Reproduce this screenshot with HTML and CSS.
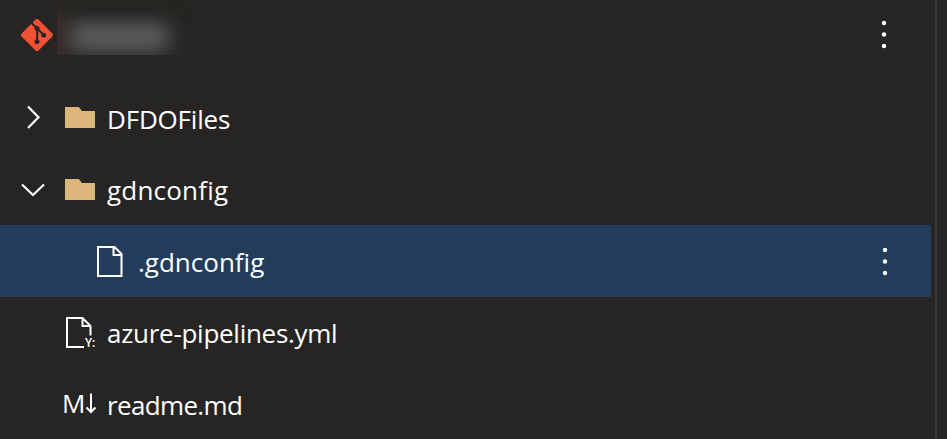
FILE: index.html
```
<!DOCTYPE html>
<html lang="en">
<head>
<meta charset="utf-8">
<title>Repository files</title>
<link rel="stylesheet" href="styles.css">
</head>
<body>
<main class="explorer">
  <header class="repo">
    <svg class="git" viewBox="0 0 24 24"><path d="M23.546 10.93L13.067.452c-.604-.603-1.582-.603-2.188 0L8.708 2.627l2.76 2.76c.645-.215 1.379-.07 1.889.441.516.515.658 1.258.438 1.9l2.658 2.66c.645-.223 1.387-.078 1.9.435.721.72.721 1.884 0 2.604-.719.719-1.881.719-2.6 0-.539-.541-.674-1.337-.404-1.996L12.86 8.955v6.525c.176.086.342.203.488.348.713.721.713 1.883 0 2.6-.719.721-1.889.721-2.609 0-.719-.719-.719-1.879 0-2.598.182-.18.387-.316.605-.406V8.835c-.217-.091-.424-.222-.6-.401-.545-.545-.676-1.342-.396-2.009L7.636 3.7.45 10.881c-.6.605-.6 1.584 0 2.189l10.48 10.477c.604.604 1.582.604 2.186 0l10.43-10.43c.605-.603.605-1.582 0-2.187"/></svg>
    <div class="redacted"><div class="smudge"></div></div>
    <svg class="more" viewBox="0 0 6 30"><circle cx="3" cy="4" r="2.2"/><circle cx="3" cy="15.500" r="2.200"/><circle cx="3" cy="27" r="2.200"/></svg>
  </header>
  <div class="row">
    <svg class="chevron" viewBox="0 0 26 26"><path d="M7 2.500l10.500 10.700L7 24"/></svg>
    <svg class="icon" viewBox="0 0 32 34"><path class="folder" d="M1 7h13.800l3.200 4h13v17H1z"/></svg>
    <span class="name dfdo">DFDOFiles</span>
  </div>
  <div class="row">
    <svg class="chevron" viewBox="0 0 26 26"><path d="M1 8.500l11 10.500 11-10.500"/></svg>
    <svg class="icon" viewBox="0 0 32 34"><path class="folder" d="M1 7h13.800l3.200 4h13v17H1z"/></svg>
    <span class="name gdn">gdnconfig</span>
  </div>
  <div class="row child selected">
    <svg class="icon" viewBox="0 0 32 34"><path class="line" d="M2 3h16.500l7 7v22H2zM17.500 3v8h8"/></svg>
    <span class="name dotgdn">.gdnconfig</span>
    <svg class="more" viewBox="0 0 6 30"><circle cx="3" cy="4" r="2.200"/><circle cx="3" cy="15.500" r="2.200"/><circle cx="3" cy="27" r="2.200"/></svg>
  </div>
  <div class="row leaf">
    <svg class="icon" viewBox="0 0 32 34"><path class="line" d="M20 31H3V2h15.500l8 8v9.500M18.500 2v8h8"/><text class="yml" x="21" y="31">Y:</text></svg>
    <span class="name azure">azure-pipelines.yml</span>
  </div>
  <div class="row leaf">
    <svg class="icon" viewBox="0 0 32 34"><text class="md" x="-2" y="25">M</text><path class="line" d="M27 5.500v18M22.500 19.500l4.500 4.500 4.500-4.500"/></svg>
    <span class="name readme">readme.md</span>
  </div>
</main>
</body>
</html>
```
FILE: styles.css
```
* { box-sizing: border-box; }
body {
  margin: 0;
  height: 439px;
  overflow: hidden;
  background: #262523;
  color: #fff;
  font-family: "Segoe UI", "Open Sans", "Noto Sans", sans-serif;
}
.explorer {
  width: 937px;
  height: 439px;
  overflow: hidden;
  padding-right: 4px;
  border-right: 2px solid #383735;
}
.repo {
  display: flex;
  height: 81px;
  padding: 0 44px 0 21px;
}
.git { width: 32px; height: 32px; margin-top: 19px; fill: #f05133; }
.redacted {
  width: 134px;
  height: 55px;
  margin-left: 4px;
  overflow: hidden;
  background: linear-gradient(90deg, #392a26, #262523 12px);
  -webkit-mask-image: linear-gradient(transparent, #000 20px);
  mask-image: linear-gradient(transparent, #000 20px);
}
.smudge {
  width: 98px;
  height: 28px;
  margin: 23px 0 0 13px;
  background: #5f5f5e;
  filter: blur(10px);
}
.more { width: 6px; height: 30px; margin-left: auto; fill: #fff; }
.repo .more { margin-top: 19px; }
.row {
  display: flex;
  align-items: center;
  width: 931px;
  height: 72px;
  padding: 0 43px 0 21px;
}
.leaf { padding-left: 64px; }
.child { padding-left: 96px; }
.selected { background: #233c5a; }
.chevron { width: 26px; height: 26px; margin-right: 17px; fill: none; stroke: #fff; stroke-width: 2.2; }
.icon { width: 32px; height: 34px; margin-right: 11px; overflow: visible; }
.child .icon { margin-right: 10px; }
.folder { fill: #dcb67a; }
.line { fill: none; stroke: #fff; stroke-width: 2; }
.yml { font-size: 12px; font-weight: 600; fill: #fff; }
.md { font-size: 26px; fill: #fff; }
.name { font-size: 26px; line-height: 36px; white-space: nowrap; }
.dfdo { padding-top: 3px; letter-spacing: -0.2px; }
.gdn { padding-top: 2px; letter-spacing: 0.2px; }
.dotgdn { padding-top: 2px; }
.azure { letter-spacing: -0.28px; }
.readme { letter-spacing: -0.65px; }
```
